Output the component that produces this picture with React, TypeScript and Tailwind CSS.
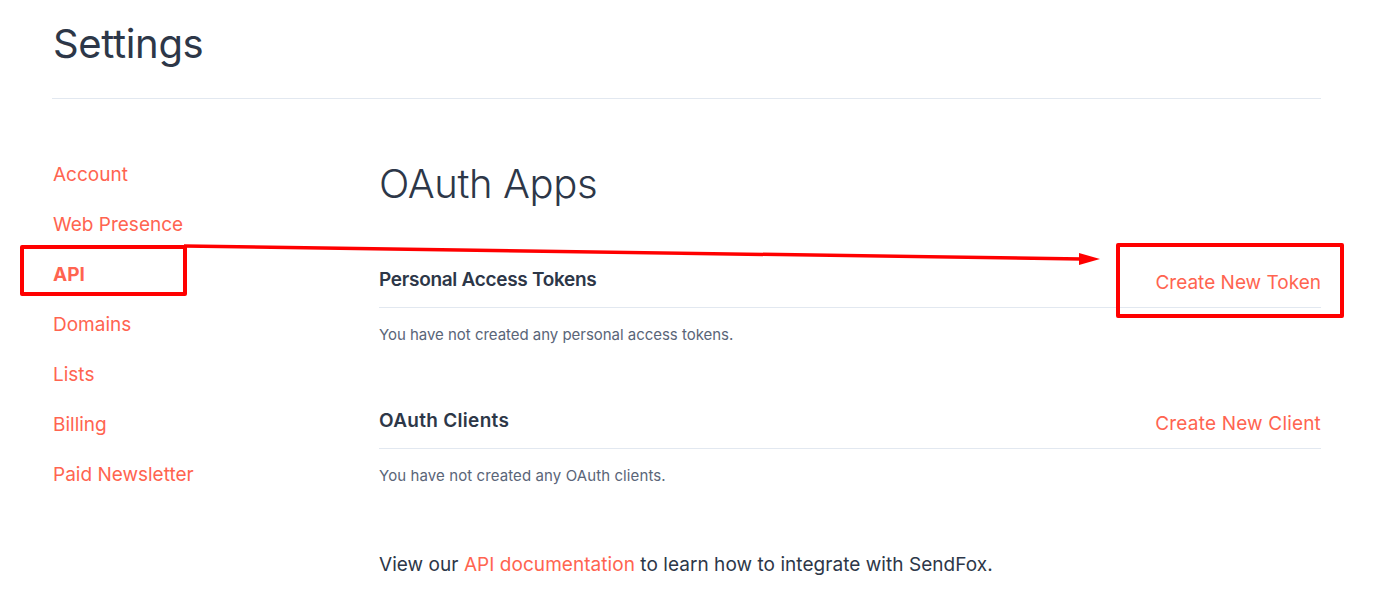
const font = "font-['Inter','Noto_Sans',sans-serif]";

const nav = ["Account", "Web Presence", "API", "Domains", "Lists", "Billing", "Paid Newsletter"];

function Section({ title, link, empty, titleClass, linkClass, emptyClass }: { title: string; link: string; empty: string; titleClass: string; linkClass: string; emptyClass: string }) {
  return (
    <section>
      <div className="flex items-end justify-between border-b border-[#e2e8f0] h-[48px] pb-[12px]">
        <h2 className={`text-[19px] leading-[24px] font-semibold text-[#2d3748] relative top-[-3px] ${titleClass}`}>{title}</h2>
        <a className={`text-[19px] leading-[24px] text-[#ff6450] ${linkClass}`}>{link}</a>
      </div>
      <p className={`mt-[17px] text-[15px] leading-[20px] text-[#5a6578] ${emptyClass}`}>{empty}</p>
    </section>
  );
}

export default function App() {
  return (
    <div className={`relative h-[602px] w-[1377px] overflow-hidden bg-white ${font}`}>
      <div className="pl-[52px] pr-[56px]">
        <header className="h-[99px] border-b border-[#e2e8f0] pt-[20px] pl-[1px]">
          <h1 className="text-[40px] leading-[48px] text-[#2d3748] tracking-[-0.35px]">Settings</h1>
        </header>
        <div className="flex pt-[61px]">
          <nav className="w-[327px] shrink-0 flex flex-col gap-[26px] mt-[3px] pl-[1px]">
            {nav.map((n) => (
              <a key={n} className={`text-[19px] leading-[24px] text-[#ff6450] ${n === "API" ? "font-bold" : ""}`}>{n}</a>
            ))}
          </nav>
          <main className="flex-1">
            <h1 className="text-[40px] leading-[48px] text-[#2d3748] tracking-[-0.4px] font-light">OAuth Apps</h1>
            <div className="mt-[52px] flex flex-col gap-[56px]">
              <Section title="Personal Access Tokens" link="Create New Token" empty="You have not created any personal access tokens." titleClass="tracking-[-0.3px]" linkClass="tracking-[0px]" emptyClass="tracking-[-0.03px]" />
              <Section title="OAuth Clients" link="Create New Client" empty="You have not created any OAuth clients." titleClass="tracking-[0.3px]" linkClass="tracking-[0.18px]" emptyClass="tracking-[0.1px]" />
            </div>
            <p className="mt-[67px] text-[19px] leading-[24px] text-[#2d3748] tracking-[0.05px]">
              View our <a className="text-[#ff6450]">API documentation</a> to learn how to integrate with SendFox.
            </p>
          </main>
        </div>
      </div>
      <div className="absolute left-[20px] top-[245px] h-[51px] w-[167px] rounded-[2px] border-[4px] border-[#ff0000]" />
      <div className="absolute left-[1116px] top-[243px] h-[75px] w-[228px] rounded-[2px] border-[4px] border-[#ff0000]" />
      <svg className="absolute left-0 top-0 pointer-events-none" width="1377" height="602" viewBox="0 0 1377 602">
        <line x1="184" y1="246" x2="1082" y2="259" stroke="#ff0000" strokeWidth="3.5" />
        <polygon points="1079,253 1100,259 1079,265" fill="#ff0000" />
      </svg>
    </div>
  );
}
